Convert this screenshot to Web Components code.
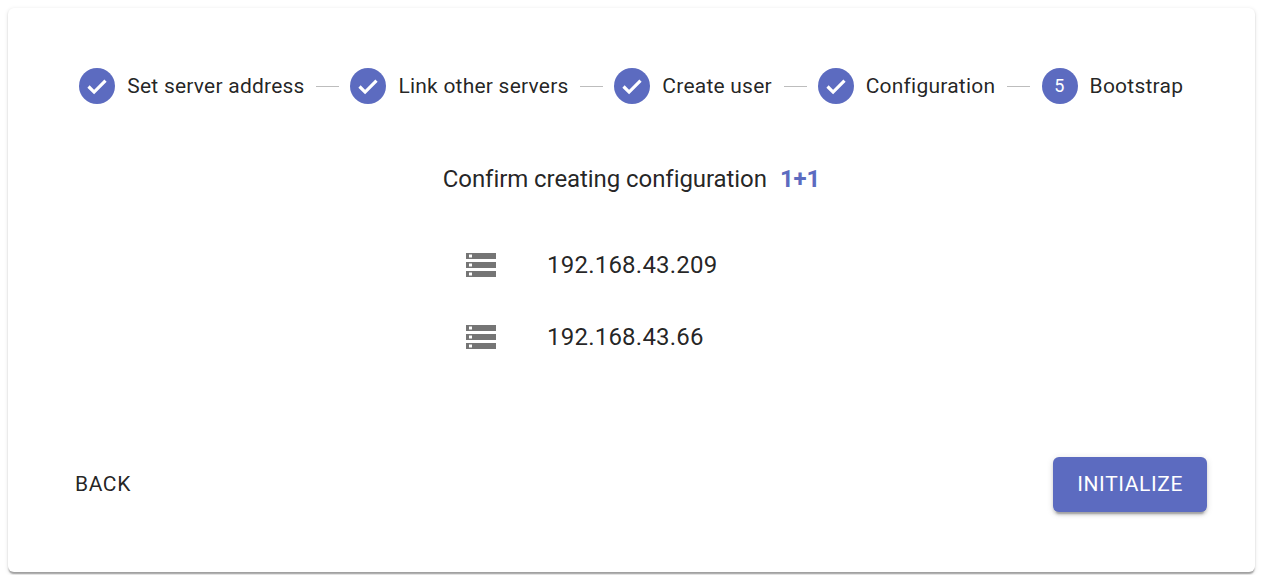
<!DOCTYPE html>
<html><head><meta charset="utf-8"><style>
html,body{margin:0;background:#fff}
body{padding:8px 8px 3px;font-family:Roboto,sans-serif;color:rgba(0,0,0,.87)}
</style></head><body>
<template id="t-card"><style>
:host{display:block;height:564px;box-sizing:border-box;background:#fff;border-radius:6px;
box-shadow:0 3px 1.5px -1.5px rgba(0,0,0,.2),0 1.5px 1.5px 0 rgba(0,0,0,.14),0 1.5px 4.5px 0 rgba(0,0,0,.12);
padding:60px 48px 60px 48px;display:flex;flex-direction:column}
</style><slot></slot></template>
<template id="t-stepper"><style>
:host{display:flex;align-items:center;justify-content:flex-start;padding-left:23.3px;height:36px;margin-bottom:57px}
</style><slot></slot></template>
<template id="t-step"><style>
:host{display:flex;align-items:center;flex:none}
:host([last]){margin-left:.6px}
.c{width:36px;height:36px;border-radius:50%;background:#5c6bc0;display:flex;align-items:center;justify-content:center;color:#fff;font-size:18px;letter-spacing:.6px;font-weight:400;flex:none}
.n{display:block;line-height:36px;height:36px}
.l{margin-left:12px;padding-top:2px;font-size:21px;letter-spacing:.225px;line-height:1.4;white-space:nowrap}
</style><span class="c"><span class="n"><slot name="i"></slot></span></span><span class="l"><slot></slot></span></template>
<template id="t-conn"><style>
:host{display:block;flex:none;width:23px;height:1px;background:#bdbdbd;margin:0 11px 0 11.75px}
</style></template>
<template id="t-title"><style>
:host{display:flex;justify-content:center;align-items:baseline;font-size:24px;letter-spacing:-.07px;line-height:36px;height:36px;margin-bottom:32px}
b{color:#5c6bc0;font-weight:700;margin-left:13px;letter-spacing:-.1px}
</style><span><slot></slot></span><b><slot name="v"></slot></b></template>
<template id="t-server"><style>
:host{display:flex;align-items:center;height:72px;padding-left:407px;font-size:24px;letter-spacing:.225px}
svg{width:36px;height:36px;fill:#757575;display:block;flex:none;margin-right:48px}
</style><svg viewBox="0 0 24 24"><path d="M2 20h20v-4H2v4zm2-3h2v2H4v-2zM2 4v4h20V4H2zm4 3H4V5h2v2zm-4 7h20v-4H2v4zm2-3h2v2H4v-2z"/></svg><slot></slot></template>
<template id="t-actions"><style>
:host{display:flex;justify-content:space-between;align-items:center;margin-top:auto}
</style><slot></slot></template>
<template id="t-btn"><style>
:host{display:inline-flex;align-items:center;justify-content:center;box-sizing:border-box;height:55px;padding:0 24px 2px;border-radius:6px;font-size:21px;font-weight:400;letter-spacing:.6px;text-transform:uppercase;white-space:nowrap}
:host([primary]){background:#5c6bc0;color:#fff;box-shadow:0 4.5px 1.5px -3px rgba(0,0,0,.2),0 3px 3px 0 rgba(0,0,0,.14),0 1.5px 7.5px 0 rgba(0,0,0,.12)}
:host(:not([primary])){padding:0 12px 2px;margin-left:7px}
</style><slot></slot></template>

<setup-card>
  <setup-stepper>
    <setup-step><svg slot="i" viewBox="0 0 36 36" width="36" height="36" style="display:block"><path d="M9.5 18.5l5.6 5.6L26.5 12.7" fill="none" stroke="#fff" stroke-width="3.2"/></svg>Set server address</setup-step>
    <step-conn></step-conn>
    <setup-step><svg slot="i" viewBox="0 0 36 36" width="36" height="36" style="display:block"><path d="M9.5 18.5l5.6 5.6L26.5 12.7" fill="none" stroke="#fff" stroke-width="3.2"/></svg>Link other servers</setup-step>
    <step-conn></step-conn>
    <setup-step><svg slot="i" viewBox="0 0 36 36" width="36" height="36" style="display:block"><path d="M9.5 18.5l5.6 5.6L26.5 12.7" fill="none" stroke="#fff" stroke-width="3.2"/></svg>Create user</setup-step>
    <step-conn></step-conn>
    <setup-step><svg slot="i" viewBox="0 0 36 36" width="36" height="36" style="display:block"><path d="M9.5 18.5l5.6 5.6L26.5 12.7" fill="none" stroke="#fff" stroke-width="3.2"/></svg>Configuration</setup-step>
    <step-conn></step-conn>
    <setup-step last><span slot="i">5</span>Bootstrap</setup-step>
  </setup-stepper>
  <confirm-title>Confirm creating configuration<span slot="v">1+1</span></confirm-title>
  <server-row>192.168.43.209</server-row>
  <server-row>192.168.43.66</server-row>
  <setup-actions><action-btn>Back</action-btn><action-btn primary>Initialize</action-btn></setup-actions>
</setup-card>
<script>
for (const [name,id] of [['setup-card','t-card'],['setup-stepper','t-stepper'],['setup-step','t-step'],['step-conn','t-conn'],['confirm-title','t-title'],['server-row','t-server'],['setup-actions','t-actions'],['action-btn','t-btn']]) {
  customElements.define(name, class extends HTMLElement {
    constructor(){super();this.attachShadow({mode:'open'}).appendChild(document.getElementById(id).content.cloneNode(true));}
  });
}
</script>
</body></html>
